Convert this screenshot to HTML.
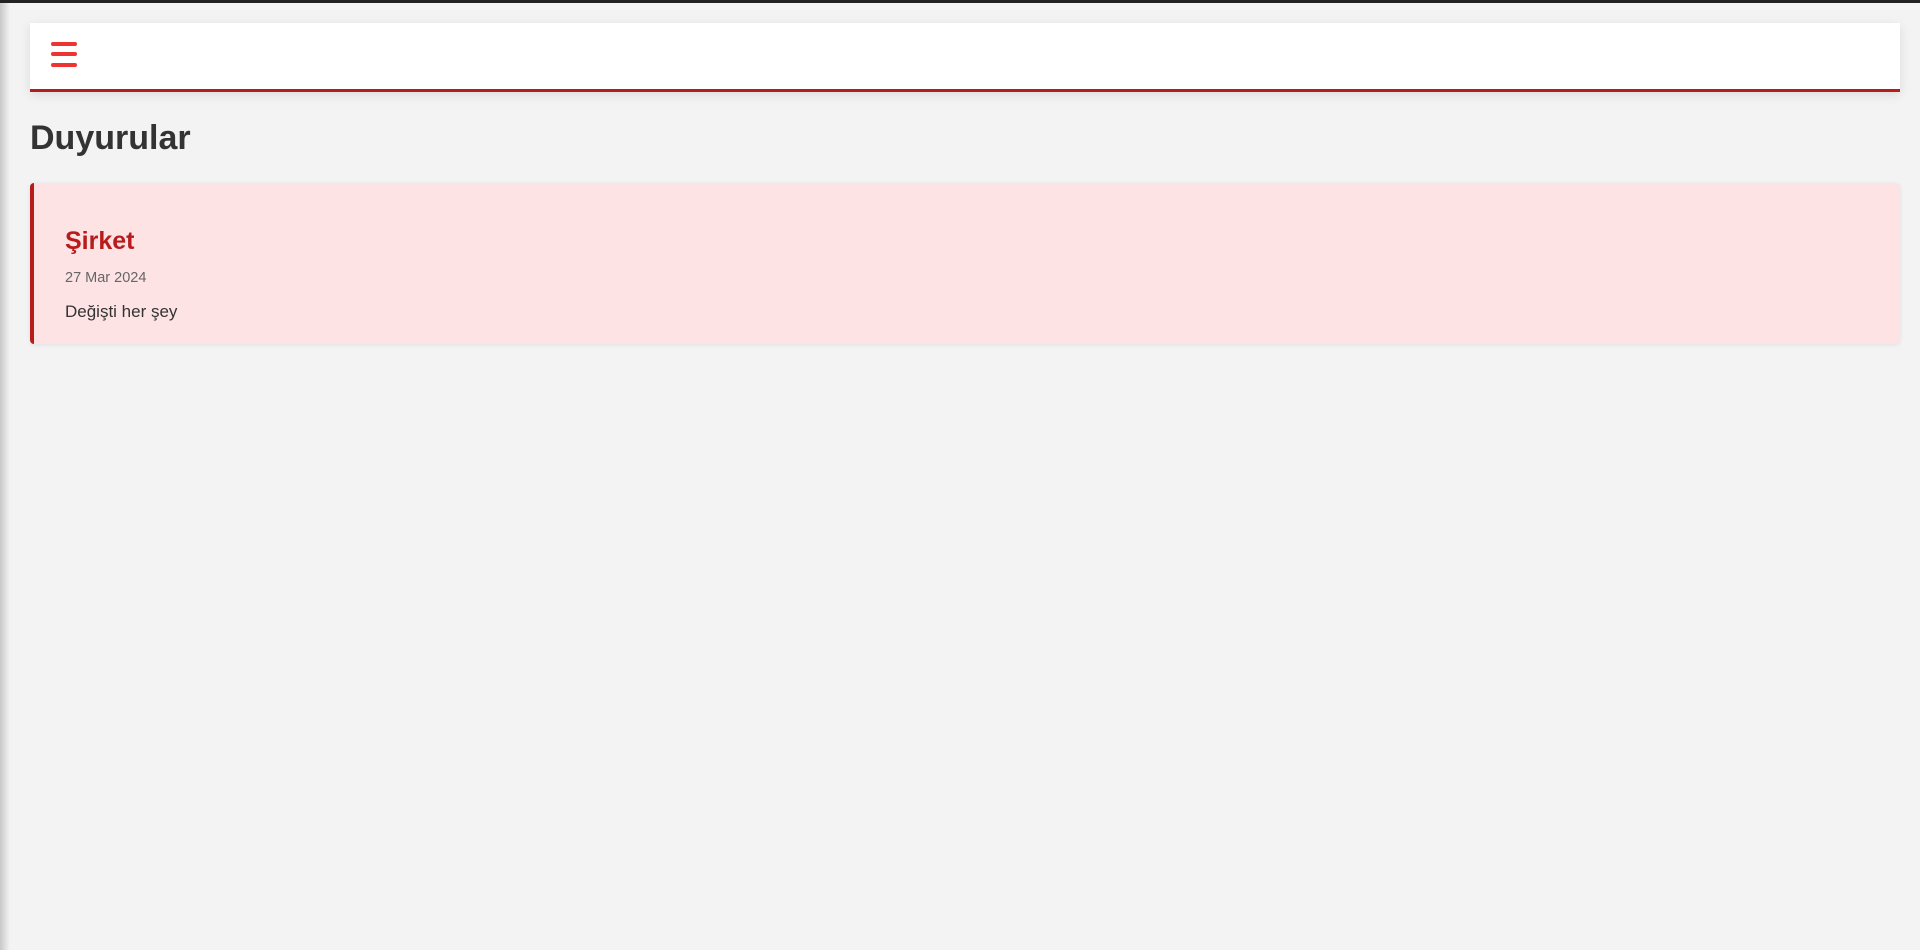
<!DOCTYPE html>
<html><head><meta charset="utf-8"><style>
*{margin:0;padding:0;box-sizing:border-box}
html,body{width:1920px;height:950px;overflow:hidden}
body{background:#f3f3f3;font-family:"Liberation Sans",sans-serif;position:relative}
.top{position:absolute;left:0;top:0;width:1920px;height:3px;background:#222}
.lsh{position:absolute;left:0;top:3px;width:10px;height:947px;background:linear-gradient(to right,#c8c8c8,#f3f3f3)}
.hdr{position:absolute;left:30px;top:23px;width:1870px;height:69px;background:#fff;border-bottom:3px solid #b71c1c;box-shadow:0 3px 10px rgba(0,0,0,.1)}
.bar{position:absolute;left:21px;width:26px;height:4px;border-radius:2px;background:#ee3333}
h1{position:absolute;left:30px;top:119px;font-size:34px;font-weight:bold;color:#333}
.card{position:absolute;left:30px;top:183px;width:1870px;height:161px;background:#fde3e4;border-left:4px solid #b71c1c;border-radius:4px;box-shadow:0 1px 4px rgba(0,0,0,.08)}
.t{position:absolute;left:31px;top:44px;font-size:25px;font-weight:bold;color:#b71c1c}
.d{position:absolute;left:31px;top:87px;font-size:14.5px;color:#666}
.b{position:absolute;left:31px;top:119px;font-size:17px;color:#333}
</style></head><body>
<div class="top"></div><div class="lsh"></div>
<div class="hdr"><div class="bar" style="top:19px"></div><div class="bar" style="top:29px"></div><div class="bar" style="top:40px"></div></div>
<h1>Duyurular</h1>
<div class="card"><div class="t">Şirket</div><div class="d">27 Mar 2024</div><div class="b">Değişti her şey</div></div>
</body></html>
